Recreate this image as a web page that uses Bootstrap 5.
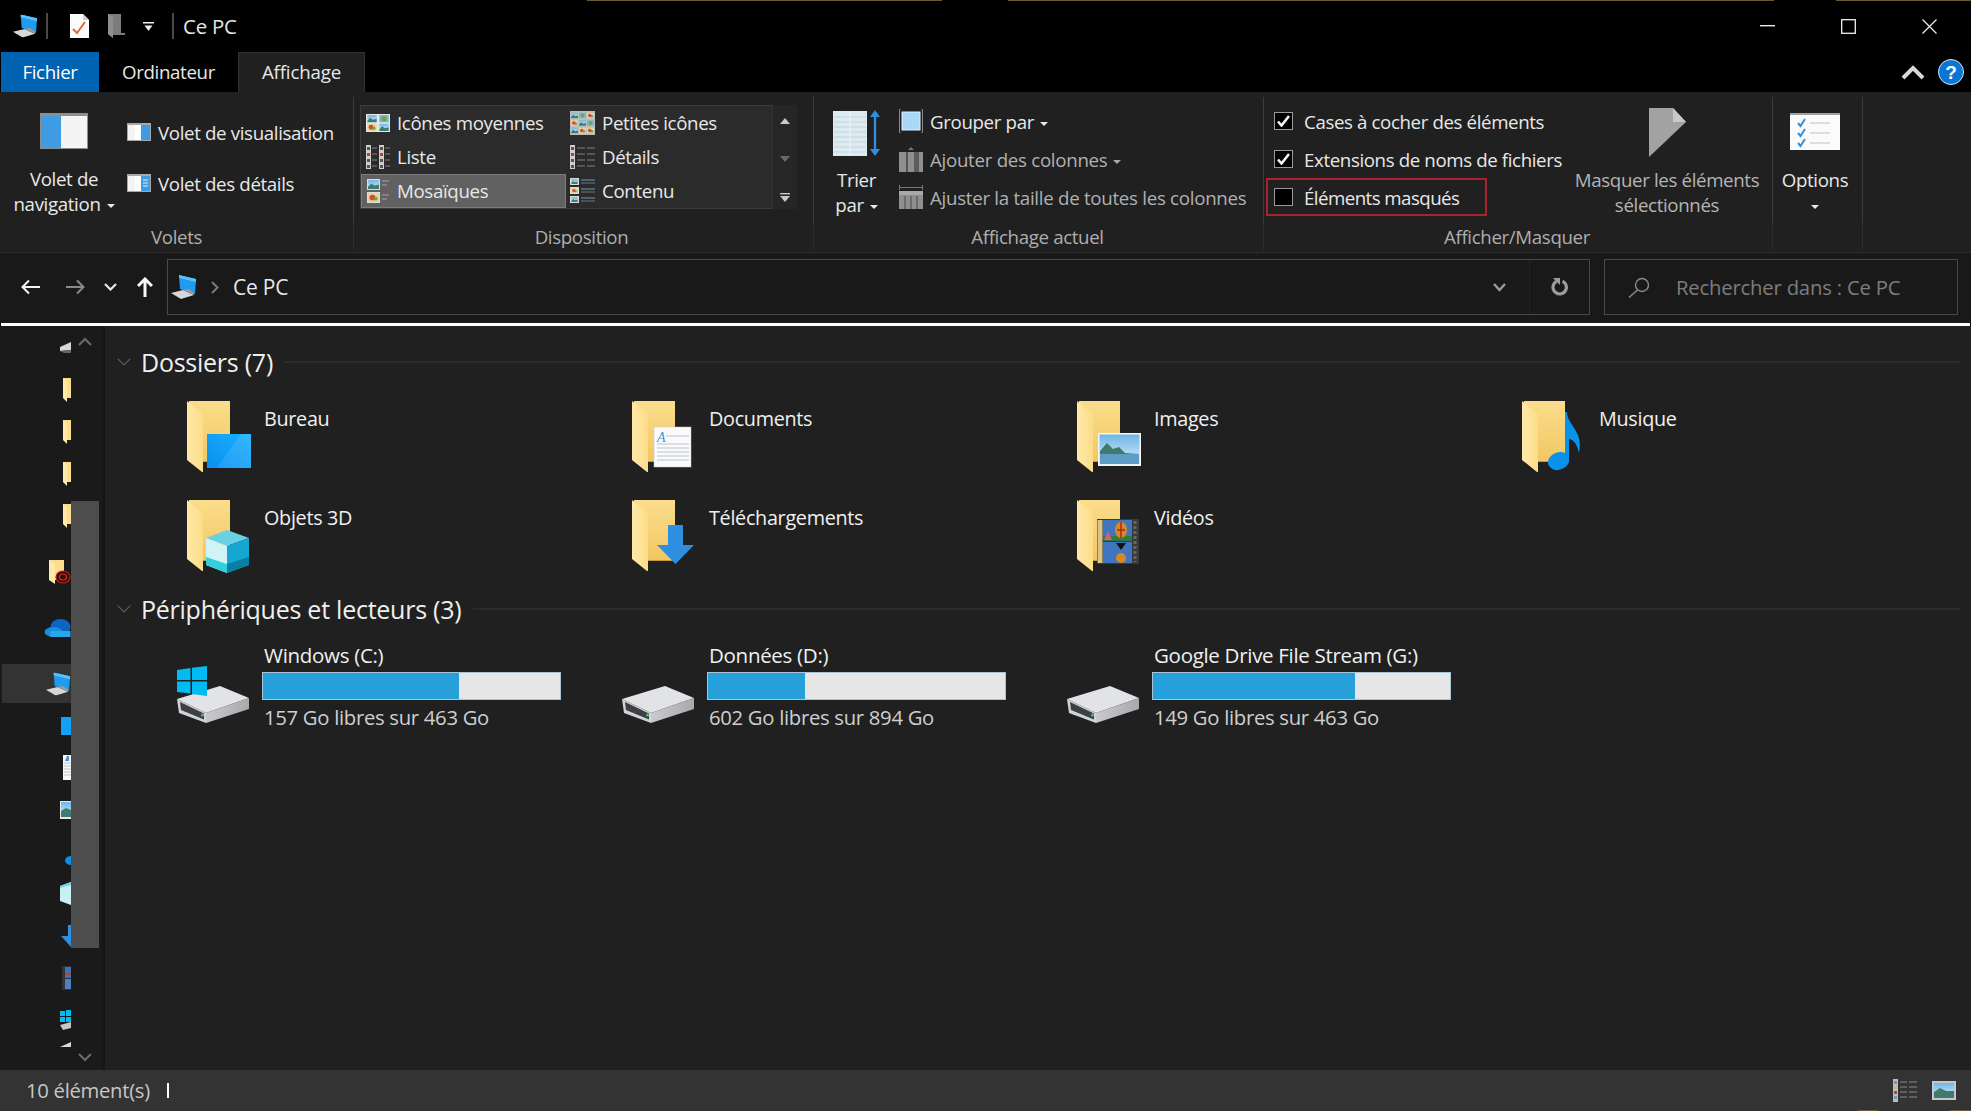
<!DOCTYPE html>
<html lang="fr">
<head>
<meta charset="utf-8">
<title>Ce PC</title>
<link rel="stylesheet" href="https://cdn.jsdelivr.net/npm/bootstrap@5.3.0/dist/css/bootstrap.min.css">
<style>
html,body{height:100%;margin:0}
body{background:#000;color:#e8e8e8;font-family:"Open Sans","Noto Sans",sans-serif;font-size:18.7px;letter-spacing:-.35px;line-height:25px;overflow:hidden}
svg{display:block;flex:none}
.defs-box{width:0;height:0;overflow:hidden}
.shell{width:1971px;height:1111px}
/* title */
.titlebar{height:52px;flex:none;background:linear-gradient(90deg,#000 587px,#6a5a33 587px,#6a5a33 942px,#000 942px,#000 1008px,#6a5a33 1008px,#6a5a33 1774px,#000 1774px,#000 1836px,#6a5a33 1836px) no-repeat top/100% 1px #000;padding-left:13px}
.tsep{width:2px;height:26px;background:#4a4a4a;flex:none}
.m9{margin-left:8px}.m22{margin-left:22px}.m19{margin-left:19px}.m18{margin-left:18px}
.ttl{margin-left:9px;font-size:20.4px;letter-spacing:-.2px;color:#e6e6e6}
.wctl{margin-left:auto;padding-right:34px;gap:66px}
/* tabs */
.tabrow{height:40px;flex:none;background:#000;padding-left:1px}
.tabx{height:40px;display:flex;align-items:center;justify-content:center;color:#e8e8e8;padding:0 0 2px}
.tabx:hover,.tabx:focus{color:#e8e8e8}
.tab-file{width:98px;background:#0063b1;color:#fff}
.tab-file:hover,.tab-file:focus{color:#fff}
.tab-comp{width:139px}
.tab-view{width:127px;background:#202020;border:1px solid #333;border-bottom:0;letter-spacing:-.15px}
.rctl{margin-left:auto;padding-right:7px;gap:13px}
/* ribbon */
.ribbon{height:161px;flex:none;background:#202020;border-bottom:1px solid #2e2e2e}
.rgrp{flex:none}
.rbody{height:126px;margin-top:5px;border-right:1px solid #3c3c3c}
.rlabel{height:27px;border-right:1px solid #2c2c2c;color:#aeaeae;text-align:center;line-height:28px;padding-right:2px}
.g1 .rlabel{padding-right:0}
.g2 .rlabel{padding-right:4px}
.g1{width:354px}.g2{width:460px}.g3{width:450px}.g4{width:509px}.g5{width:90px}
.bigbtn{text-align:center;flex:none}
.bigtxt{margin-top:17px}
.caret-dn{display:inline-block;width:0;height:0;border-left:4px solid transparent;border-right:4px solid transparent;border-top:4px solid #e8e8e8;margin-left:6px;vertical-align:3px}
.caret-dim{border-top-color:#a8a8a8}
.w128{width:128px}
.smcol{margin-left:-1px;padding-top:18px;gap:17px}
.smrow{height:34px;gap:7px}
.gallery{margin:8px 0 0 6px;width:413px;height:104px;background:#2b2b2b;border:1px solid #3c3c3c;border-right-color:#333;display:grid;grid-template-columns:205px 207px;grid-auto-rows:34px;flex:none}
.gcell{gap:7px;padding-left:5px}
.gcell span{margin-top:-2px}
.gcell.gsel{background:#616161;outline:1px solid #7c7c7c;outline-offset:-1px}
.gcell.ic2{padding-left:4px;gap:7px}
.gscroll{margin-top:8px;width:24px;height:104px;background:#262626;padding:13px 0 7px;flex:none}
.trier{width:85px}
.tic{margin-top:13px}
.trtxt{margin-top:11px}
.list3{padding-top:5px}
.lrow{height:38px;gap:7px}
.lrow.dim{color:#b0b0b0;letter-spacing:-.28px}
.chkcol{width:295px;margin-left:2px;flex:none;padding-top:5px}
.ckrow{height:38px;padding-left:8px;gap:11px;letter-spacing:-.38px}
.ckrow.boxed{width:221px;border:2px solid #a9232e;padding-left:6px;letter-spacing:-.55px}
.ckb{width:19px;height:18px;background:#000;border:1px solid #9a9a9a;flex:none;display:flex;align-items:center;justify-content:center}
.masq{width:212px;color:#b4b4b4}
.mic{margin-top:11px}
.mtxt{margin-top:10px}
.opt{width:84px}
/* address */
.addrband{height:70px;flex:none;background:#191919;padding:6px 13px 8px 21px}
.addrbox{width:1423px;height:56px;border:1px solid #4a4a4a;margin-left:14px;padding-left:3px;flex:none}
.nav-m66{margin-left:26px}.nav-m105{margin-left:19px}.nav-m137{margin-left:20px}
.crumb{margin-left:14px;margin-right:14px}
.addrtxt{color:#e8e8e8;font-size:21px;letter-spacing:-.2px}
.addrend{margin-left:auto;height:100%}
.adrop{width:60px;justify-content:flex-start;padding-left:24px}
.arefresh{width:60px;height:100%;border-left:1px solid #242424;justify-content:center}
.search{width:354px;height:56px;border:1px solid #4a4a4a;margin-left:14px;padding-left:23px;gap:25px;color:#7d7d7d;flex:none;font-size:20.3px;letter-spacing:-.2px}
.whitel{height:3px;background:#fff;margin:0 1px;flex:none}
/* content */
.content{height:744px;flex:none;background:#1a1a1a}
.navcol{width:69px;margin-left:2px;padding-top:2px;flex:none;overflow:hidden}
.nrow{height:39px;margin-bottom:3px;justify-content:flex-end;flex:none}
.nrow.sel{background:#333}
.nrow.gapt{margin-top:17px}
.nudge{margin-top:18px}
.sbar{width:28px;flex:none;padding-top:11px;height:744px}
.sthumb{height:447px;width:28px;background:#4d4d4d;margin-top:154px}
.sdn{margin-top:104px}
.splitter{width:3px;background:#161616;margin-left:3px;flex:none}
.mainp{flex:1;background:#202020;padding:22px 0 0 14px;color:#f0f0f0;font-size:19.8px;letter-spacing:-.3px}
.hdr{height:28px;margin-left:-2px;gap:10px;padding-right:10px}
.hdr-t{font-size:25px;letter-spacing:-.25px;color:#efefef;white-space:nowrap}
.hrule{flex:1;height:2px;background:#2b2b2b;margin-left:2px}
.grid4{display:grid;grid-template-columns:repeat(4,445px);margin-left:58px}
.grid4.folders{margin-top:25px;grid-auto-rows:99px;height:198px}
.fitem{display:flex}
.ficon{width:87px;padding-left:10px;flex:none}
.ftext{padding-top:5px;white-space:nowrap}
.hdr2{margin-top:-4px}
.grid4.drives{margin-top:19px;font-size:20.5px}
.ditem{display:flex}
.dicon{width:87px;height:81px;display:flex;align-items:flex-end;flex:none}
.dtitle{height:29px;white-space:nowrap;line-height:26px}
.dbar{width:299px;height:28px;margin-left:-2px;border-radius:0;background:#e6e6e6;border:1px solid #a9c4d6;margin-top:1px}
.dbar .progress-bar{background:#26a0da}
.dsub{color:#cfcfcf;white-space:nowrap;margin-top:5px;font-size:20.3px}
/* status */
.statusb{height:41px;flex:none;background:linear-gradient(90deg,#333 1858px,#6a5a33 1858px,#6a5a33 1878px,#333 1878px,#333 1950px,#6a5a33 1950px) no-repeat bottom/100% 1px #333;padding-left:26px;color:#c6c6c6;padding-right:15px;font-size:20.3px;letter-spacing:-.3px}
.caretbar{width:2px;height:15px;background:#fff;margin-left:17px}
.statr{margin-left:auto;gap:15px}
</style>
</head>
<body>
<svg class="defs-box" xmlns="http://www.w3.org/2000/svg">
<defs>
<linearGradient id="fb" x1="0" y1="0" x2="0" y2="1"><stop offset="0" stop-color="#fbdd8c"/><stop offset="1" stop-color="#f2c763"/></linearGradient>
<linearGradient id="ff" x1="0" y1="0" x2="1" y2="0"><stop offset="0" stop-color="#ffe9a8"/><stop offset="1" stop-color="#fcdc88"/></linearGradient>
<linearGradient id="blu" x1="0" y1="1" x2="1" y2="0"><stop offset="0" stop-color="#0a8ff0"/><stop offset="1" stop-color="#1ab0ff"/></linearGradient>
<linearGradient id="sky" x1="0" y1="0" x2="0" y2="1"><stop offset="0" stop-color="#6fb6e6"/><stop offset="1" stop-color="#d8eefa"/></linearGradient>
<linearGradient id="dr" x1="0" y1="0" x2="1" y2="0"><stop offset="0" stop-color="#c9c9ce"/><stop offset="1" stop-color="#a9a9ad"/></linearGradient>
<symbol id="folder" viewBox="0 0 43 71">
<rect x="2" y="0" width="41" height="60" fill="url(#fb)"/>
<polygon points="0,0 16,13 16,71 15,71 0,59" fill="url(#ff)"/>
<rect x="16" y="60" width="27" height="1" fill="#c79c3e"/>
</symbol>
<symbol id="pc" viewBox="0 0 26 24">
<polygon points="8,0 25,4 24,19 9,14" fill="#1f9bf0"/>
<polygon points="8,0 25,4 25,7 8,3" fill="#5cc1f8"/>
<polygon points="0,18 12,15 23,20 10,24" fill="#d7d7d7"/>
<polygon points="12,15 18,14 23,18 23,20" fill="#9a9a9a"/>
</symbol>
<symbol id="drive" viewBox="0 0 72 37">
<polygon points="0,13 43,0 72,12 29,27" fill="#e1e3e6"/>
<polygon points="29,27 72,12 72,23 29,37" fill="url(#dr)"/>
<polygon points="0,13 29,27 29,37 2,27" fill="#d2d2d4"/>
<polygon points="3,16 27,27.5 27,33.5 4,24" fill="#3c4044"/>
<circle cx="25.5" cy="29" r="1.5" fill="#3ecb5c"/>
</symbol>
<symbol id="land" viewBox="0 0 10 8"><rect width="10" height="8" fill="url(#sky)"/><polygon points="0,6 3,3 6,5 10,4 10,8 0,8" fill="#3c7d70"/></symbol>
<symbol id="flow" viewBox="0 0 10 8"><rect width="10" height="8" fill="#e4d39a"/><circle cx="4" cy="4" r="2.6" fill="#d9482c"/><circle cx="7" cy="5" r="1.7" fill="#63a93e"/></symbol>
<symbol id="ggreen" viewBox="0 0 10 8"><rect width="10" height="8" fill="#7ab6d8"/><circle cx="5" cy="4" r="2.8" fill="#6fa83c"/></symbol>
</defs>
</svg>

<div class="shell d-flex flex-column">
  <!-- TITLE BAR -->
  <div class="titlebar d-flex align-items-center">
    <svg width="25" height="24" viewBox="0 0 26 24"><use href="#pc"/></svg>
    <div class="tsep m9"></div>
    <svg class="m22" width="19" height="24" viewBox="0 0 19 24"><polygon points="0,0 13,0 19,6 19,24 0,24" fill="#fbfbfb"/><polygon points="13,0 19,6 13,6" fill="#cfcfcf"/><path d="M3 15 7 19 15 8" fill="none" stroke="#e9662a" stroke-width="2"/></svg>
    <svg class="m19" width="17" height="24" viewBox="0 0 17 24"><polygon points="0,0 13,0 13,19 17,19 17,21 5,21 5,24 0,20" fill="#7c7c7c"/><polygon points="0,0 5,3 5,24 0,20" fill="#8e8e8e"/></svg>
    <svg class="m18" width="11" height="9" viewBox="0 0 11 9"><rect width="11" height="1.5" fill="#eee"/><polygon points="1.5,3.5 9.5,3.5 5.5,9" fill="#eee"/></svg>
    <div class="tsep m18"></div>
    <div class="ttl">Ce PC</div>
    <div class="wctl d-flex align-items-center">
      <svg width="15" height="2" viewBox="0 0 15 2"><rect width="15" height="1.4" fill="#e8e8e8"/></svg>
      <svg width="15" height="15" viewBox="0 0 15 15"><rect x=".7" y=".7" width="13.6" height="13.6" fill="none" stroke="#f0f0f0" stroke-width="1.3"/></svg>
      <svg width="15" height="15" viewBox="0 0 15 15"><path d="M.5.5 14.5 14.5M14.5.5.5 14.5" stroke="#f0f0f0" stroke-width="1.2"/></svg>
    </div>
  </div>
  <!-- TABS -->
  <div class="tabrow d-flex align-items-end">
    <ul class="nav">
      <li class="nav-item"><a class="nav-link tabx tab-file" href="#">Fichier</a></li>
      <li class="nav-item"><a class="nav-link tabx tab-comp" href="#">Ordinateur</a></li>
      <li class="nav-item"><a class="nav-link tabx tab-view" href="#">Affichage</a></li>
    </ul>
    <div class="rctl d-flex align-items-center align-self-center">
      <svg width="24" height="17" viewBox="0 0 24 17"><path d="M2 14 12 4 22 14" fill="none" stroke="#d8d8d8" stroke-width="4"/></svg>
      <svg width="26" height="26" viewBox="0 0 26 26"><circle cx="13" cy="13" r="12.5" fill="#0a76d3" stroke="#cfe6fa" stroke-width="1"/><text x="13" y="19.5" text-anchor="middle" font-family="Liberation Sans,sans-serif" font-size="19" font-weight="700" fill="#fff">?</text></svg>
    </div>
  </div>
  <!-- RIBBON -->
  <div class="ribbon d-flex">
    <!-- Volets -->
    <div class="rgrp g1">
      <div class="rbody d-flex">
        <div class="bigbtn w128">
          <div class="d-flex justify-content-center pt-3">
            <svg width="48" height="36" viewBox="0 0 48 36"><rect width="48" height="36" fill="#8e8e8e"/><rect x="1" y="3" width="20" height="32" fill="#3f9be2"/><rect x="21" y="3" width="26" height="32" fill="#f4f4f4"/></svg>
          </div>
          <div class="bigtxt">Volet de<br>navigation<span class="caret-dn"></span></div>
        </div>
        <div class="smcol d-flex flex-column">
          <div class="smrow d-flex align-items-center"><svg width="24" height="18" viewBox="0 0 24 18"><rect width="24" height="18" fill="#a8a8a8"/><rect x="1" y="2" width="7" height="15" fill="#f4f4f4"/><rect x="8" y="2" width="6" height="15" fill="#ffffff"/><rect x="14" y="2" width="9" height="15" fill="#3f9be2"/></svg><span>Volet de visualisation</span></div>
          <div class="smrow d-flex align-items-center"><svg width="24" height="18" viewBox="0 0 24 18"><rect width="24" height="18" fill="#a8a8a8"/><rect x="1" y="2" width="7" height="15" fill="#f4f4f4"/><rect x="8" y="2" width="6" height="15" fill="#ffffff"/><rect x="14" y="2" width="9" height="15" fill="#3f9be2"/><path d="M16 6h5M16 9h5M16 12h5" stroke="#dff0fb" stroke-width="1"/></svg><span>Volet des détails</span></div>
        </div>
      </div>
      <div class="rlabel">Volets</div>
    </div>
    <!-- Disposition -->
    <div class="rgrp g2">
      <div class="rbody d-flex">
        <div class="gallery">
          <div class="gcell d-flex align-items-center"><svg width="24" height="18" viewBox="0 0 24 18"><rect width="24" height="18" fill="#e8e8e8"/><use href="#land" x="1" y="1" width="10" height="7.5"/><use href="#ggreen" x="13" y="1" width="10" height="7.5"/><use href="#flow" x="1" y="9.5" width="10" height="7.5"/><use href="#land" x="13" y="9.5" width="10" height="7.5"/></svg><span>Icônes moyennes</span></div>
          <div class="gcell ic2 d-flex align-items-center"><svg width="25" height="24" viewBox="0 0 25 24"><rect width="25" height="24" fill="#bdbdbd"/><use href="#land" x="1" y="1" width="7" height="7"/><use href="#ggreen" x="9" y="1" width="7" height="7"/><use href="#flow" x="17" y="1" width="7" height="7"/><use href="#flow" x="1" y="8.5" width="7" height="7"/><use href="#land" x="9" y="8.5" width="7" height="7"/><use href="#ggreen" x="17" y="8.5" width="7" height="7"/><use href="#land" x="1" y="16" width="7" height="7"/><use href="#flow" x="9" y="16" width="7" height="7"/><use href="#flow" x="17" y="16" width="7" height="7"/></svg><span>Petites icônes</span></div>
          <div class="gcell d-flex align-items-center"><svg width="24" height="24" viewBox="0 0 24 24"><rect x="0" y="0" width="5" height="24" fill="#cfcfcf"/><rect x="1" y="2" width="3" height="3" fill="#555"/><rect x="1" y="8" width="3" height="3" fill="#b4452f"/><rect x="1" y="14" width="3" height="3" fill="#555"/><rect x="1" y="20" width="3" height="3" fill="#555"/><path d="M6 3h5M6 9h5M6 15h5M6 21h5" stroke="#666" stroke-width="1.4"/><rect x="13" y="0" width="5" height="24" fill="#cfcfcf"/><rect x="14" y="2" width="3" height="3" fill="#555"/><rect x="14" y="8" width="3" height="3" fill="#b4452f"/><rect x="14" y="14" width="3" height="3" fill="#555"/><rect x="14" y="20" width="3" height="3" fill="#555"/><path d="M19 3h5M19 9h5M19 15h5M19 21h5" stroke="#666" stroke-width="1.4"/></svg><span>Liste</span></div>
          <div class="gcell ic2 d-flex align-items-center"><svg width="25" height="24" viewBox="0 0 25 24"><rect x="0" y="0" width="5" height="24" fill="#cfcfcf"/><rect x="1" y="2" width="3" height="3" fill="#555"/><rect x="1" y="8" width="3" height="3" fill="#b4452f"/><rect x="1" y="14" width="3" height="3" fill="#555"/><rect x="1" y="20" width="3" height="3" fill="#555"/><path d="M7 3h8M17 3h8M7 9h8M17 9h8M7 15h8M17 15h8M7 21h8M17 21h8" stroke="#666" stroke-width="1.4"/></svg><span>Détails</span></div>
          <div class="gcell gsel d-flex align-items-center"><svg width="24" height="26" viewBox="0 0 24 26"><rect x="1" y="1" width="13" height="11" fill="#ddd"/><use href="#land" x="2" y="2" width="11" height="9"/><rect x="1" y="14" width="13" height="11" fill="#ddd"/><use href="#flow" x="2" y="15" width="11" height="9"/><path d="M16 3h7M16 7h5M16 17h7M16 21h5" stroke="#8e8e8e" stroke-width="1.4"/></svg><span>Mosaïques</span></div>
          <div class="gcell ic2 d-flex align-items-center"><svg width="25" height="26" viewBox="0 0 25 26"><rect x="0" y="0" width="9" height="7" fill="#ddd"/><use href="#land" x="1" y="1" width="7" height="5"/><rect x="0" y="9" width="9" height="7" fill="#ddd"/><use href="#flow" x="1" y="10" width="7" height="5"/><rect x="0" y="18" width="9" height="7" fill="#ddd"/><use href="#land" x="1" y="19" width="7" height="5"/><path d="M11 2h14M11 11h14M11 20h14" stroke="#6d9bc6" stroke-width="1.2"/><path d="M11 5h14M11 14h14M11 23h14" stroke="#777" stroke-width="1.2"/></svg><span>Contenu</span></div>
        </div>
        <div class="gscroll d-flex flex-column justify-content-between align-items-center">
          <svg width="10" height="6" viewBox="0 0 10 6"><polygon points="5,0 10,6 0,6" fill="#c8c8c8"/></svg>
          <svg width="10" height="6" viewBox="0 0 10 6"><polygon points="5,6 10,0 0,0" fill="#6a6a6a"/></svg>
          <svg width="10" height="9" viewBox="0 0 10 9"><rect width="10" height="1.4" fill="#c8c8c8"/><polygon points="5,9 10,3 0,3" fill="#c8c8c8"/></svg>
        </div>
      </div>
      <div class="rlabel">Disposition</div>
    </div>
    <!-- Affichage actuel -->
    <div class="rgrp g3">
      <div class="rbody d-flex">
        <div class="bigbtn trier">
          <div class="tic d-flex justify-content-center">
            <svg width="48" height="46" viewBox="0 0 48 46"><rect x="0" y="1" width="34" height="45" fill="#dceaf2"/><path d="M1 7h32M1 12h32M1 17h32M1 22h32M1 27h32M1 32h32M1 37h32M1 42h32" stroke="#c4d4dc" stroke-width="1"/><path d="M17 1v45" stroke="#eef5f8" stroke-width="1"/><path d="M42 5v36" stroke="#2e8fe0" stroke-width="2.4"/><polygon points="42,0 47,7 37,7" fill="#2e8fe0"/><polygon points="42,46 47,39 37,39" fill="#2e8fe0"/></svg>
          </div>
          <div class="trtxt">Trier<br>par<span class="caret-dn"></span></div>
        </div>
        <div class="list3 d-flex flex-column">
          <div class="lrow d-flex align-items-center"><svg width="24" height="24" viewBox="0 0 24 24"><path d="M1.5 0.5H0.5V23.5H1.5M22.5 0.5H23.5V23.5H22.5" fill="none" stroke="#888"/><rect x="3" y="3" width="18" height="18" fill="#a9d7f8" stroke="#dff1fd"/></svg><span>Grouper par<span class="caret-dn"></span></span></div>
          <div class="lrow dim d-flex align-items-center"><svg width="24" height="25" viewBox="0 0 24 25"><rect y="5" width="24" height="20" fill="#8f8f8f"/><rect x="7" y="5" width="2" height="20" fill="#555"/><rect x="15" y="5" width="5" height="20" fill="#5d5d5d"/><polygon points="12,0 15,3 9,3" fill="#777"/></svg><span>Ajouter des colonnes<span class="caret-dn caret-dim"></span></span></div>
          <div class="lrow dim d-flex align-items-center"><svg width="24" height="24" viewBox="0 0 24 24"><path d="M.5 0v5M23.5 0v5M1 2.5h22" stroke="#777" stroke-width="1"/><rect y="6" width="24" height="18" fill="#8f8f8f"/><rect y="6" width="24" height="4" fill="#a8a8a8"/><path d="M6 11v13M12 11v13M18 11v13" stroke="#555" stroke-width="1.2"/></svg><span>Ajuster la taille de toutes les colonnes</span></div>
        </div>
      </div>
      <div class="rlabel">Affichage actuel</div>
    </div>
    <!-- Afficher/Masquer -->
    <div class="rgrp g4">
      <div class="rbody d-flex">
        <div class="chkcol d-flex flex-column">
          <div class="ckrow d-flex align-items-center"><span class="ckb"><svg width="13" height="12" viewBox="0 0 13 12"><path d="M1 6.5 4.5 10.5 12 1" fill="none" stroke="#f4f4f4" stroke-width="2.6"/></svg></span><span class="text-nowrap">Cases à cocher des éléments</span></div>
          <div class="ckrow d-flex align-items-center"><span class="ckb"><svg width="13" height="12" viewBox="0 0 13 12"><path d="M1 6.5 4.5 10.5 12 1" fill="none" stroke="#f4f4f4" stroke-width="2.6"/></svg></span><span class="text-nowrap">Extensions de noms de fichiers</span></div>
          <div class="ckrow boxed d-flex align-items-center"><span class="ckb"></span><span class="text-nowrap">Éléments masqués</span></div>
        </div>
        <div class="bigbtn masq">
          <div class="mic d-flex justify-content-center"><svg width="37" height="49" viewBox="0 0 37 49"><polygon points="0,0 24,0 37,14 0,49" fill="#a2a2a2"/><polygon points="24,0 37,14 24,14" fill="#c8c8c8"/></svg></div>
          <div class="mtxt">Masquer les éléments<br>sélectionnés</div>
        </div>
      </div>
      <div class="rlabel">Afficher/Masquer</div>
    </div>
    <!-- Options -->
    <div class="rgrp g5">
      <div class="rbody">
        <div class="bigbtn opt">
          <div class="d-flex justify-content-center pt-3"><svg width="50" height="37" viewBox="0 0 50 37"><rect width="50" height="37" fill="#fbfbfb"/><rect width="50" height="2" fill="#a0a0a0"/><path d="M8 10 10.500 13 15 6M8 20 10.500 23 15 16M8 30 10.500 33 15 26" fill="none" stroke="#3a8ed6" stroke-width="2"/><path d="M20 10h20M20 20h20M20 30h20" stroke="#d6d6d6" stroke-width="1.5"/></svg></div>
          <div class="bigtxt">Options<br><span class="caret-dn m-0"></span></div>
        </div>
      </div>
      <div class="rlabel"></div>
    </div>
  </div>
  <!-- ADDRESS -->
  <div class="addrband d-flex align-items-center">
    <svg width="19" height="16" viewBox="0 0 19 16"><path d="M19 8H2M8 1.500 1.500 8 8 14.500" fill="none" stroke="#f4f4f4" stroke-width="2"/></svg>
    <svg class="nav-m66" width="19" height="16" viewBox="0 0 19 16"><path d="M0 8H17M11 1.500 17.500 8 11 14.500" fill="none" stroke="#8a8a8a" stroke-width="2"/></svg>
    <svg class="nav-m105" width="13" height="8" viewBox="0 0 13 8"><path d="M1 1 6.500 6.500 12 1" fill="none" stroke="#e8e8e8" stroke-width="2.200"/></svg>
    <svg class="nav-m137" width="16" height="20" viewBox="0 0 16 20"><path d="M8 20V2M1 9 8 2 15 9" fill="none" stroke="#f8f8f8" stroke-width="3"/></svg>
    <div class="addrbox d-flex align-items-center">
      <svg width="26" height="24" viewBox="0 0 26 24"><use href="#pc"/></svg>
      <svg class="crumb" width="8" height="13" viewBox="0 0 8 13"><path d="M1 1 6.500 6.500 1 12" fill="none" stroke="#7a7a7a" stroke-width="2"/></svg>
      <span class="addrtxt">Ce PC</span>
      <div class="addrend d-flex align-items-center">
        <div class="adrop d-flex align-items-center"><svg width="13" height="9" viewBox="0 0 13 9"><path d="M1 1 6.500 7 12 1" fill="none" stroke="#9c9c9c" stroke-width="2.400"/></svg></div>
        <div class="arefresh d-flex align-items-center"><svg width="18" height="18" viewBox="0 0 18 18"><path d="M11.500 3.200A6.700 6.700 0 1 1 5.500 3.400" fill="none" stroke="#9c9c9c" stroke-width="3.200"/><polygon points="2,0 9,0 9,7" fill="#9c9c9c"/></svg></div>
      </div>
    </div>
    <div class="search d-flex align-items-center">
      <svg width="23" height="21" viewBox="0 0 23 21"><circle cx="14" cy="8" r="6.500" fill="none" stroke="#8a8a8a" stroke-width="1.400"/><path d="M9.500 13 1 20.500" stroke="#8a8a8a" stroke-width="1.500"/></svg>
      <span>Rechercher dans : Ce PC</span>
    </div>
  </div>
  <div class="whitel"></div>
  <!-- CONTENT -->
  <div class="content d-flex">
    <div class="navcol">
      <div class="nrow d-flex align-items-center"><svg width="11" height="11" viewBox="0 0 11 11"><polygon points="0,5 11,0 11,8 0,9" fill="#d8d8d8"/><polygon points="0,9 11,8 11,11 4,11" fill="#666"/></svg></div>
      <div class="nrow d-flex align-items-center"><svg width="8" height="24" viewBox="0 0 8 24"><rect width="8" height="20" fill="#fbdd8c"/><polygon points="0,0 4,3 4,24 0,20" fill="#ffe9a8"/></svg></div>
      <div class="nrow d-flex align-items-center"><svg width="8" height="24" viewBox="0 0 8 24"><rect width="8" height="20" fill="#fbdd8c"/><polygon points="0,0 4,3 4,24 0,20" fill="#ffe9a8"/></svg></div>
      <div class="nrow d-flex align-items-center"><svg width="8" height="24" viewBox="0 0 8 24"><rect width="8" height="20" fill="#fbdd8c"/><polygon points="0,0 4,3 4,24 0,20" fill="#ffe9a8"/></svg></div>
      <div class="nrow d-flex align-items-center"><svg width="8" height="24" viewBox="0 0 8 24"><rect width="8" height="20" fill="#fbdd8c"/><polygon points="0,0 4,3 4,24 0,20" fill="#ffe9a8"/></svg></div>
      <div class="nrow gapt d-flex align-items-center"><svg width="22" height="24" viewBox="0 0 22 24"><rect width="15" height="20" fill="#fbdd8c"/><polygon points="0,0 6,3 6,24 0,20" fill="#ffe9a8"/><ellipse cx="14" cy="17" rx="7" ry="6" fill="#3a0a08" stroke="#c21b16" stroke-width="1.200"/><ellipse cx="14" cy="17" rx="3.500" ry="3" fill="none" stroke="#d2352d" stroke-width="1.200"/></svg></div>
      <div class="nrow gapt d-flex align-items-center"><svg width="27" height="18" viewBox="0 0 26 18"><ellipse cx="16" cy="8" rx="10" ry="8" fill="#0a66c2"/><ellipse cx="9" cy="13" rx="9" ry="5" fill="#1490df"/><rect x="6" y="12" width="20" height="6" fill="#28a8ea"/></svg></div>
      <div class="nrow sel gapt d-flex align-items-center"><svg width="25" height="24" viewBox="0 0 26 24"><use href="#pc"/></svg></div>
      <div class="nrow d-flex align-items-center"><svg width="10" height="18" viewBox="0 0 10 18"><rect width="10" height="18" fill="#12a0f8"/></svg></div>
      <div class="nrow d-flex align-items-center"><svg width="8" height="25" viewBox="0 0 8 25"><rect width="8" height="25" fill="#f8f8f8"/><path d="M1 8h7M1 11h7M1 14h7M1 17h7M1 20h7" stroke="#b7c4d0" stroke-width="1"/><polygon points="4,1 6,1 6,6 2,6" fill="#4a92d4"/></svg></div>
      <div class="nrow d-flex align-items-center"><svg width="11" height="18" viewBox="0 0 11 18"><rect width="11" height="18" fill="#e8e8e8"/><rect x="1" y="1" width="10" height="15" fill="url(#sky)"/><polygon points="1,10 6,7 11,9 11,16 1,16" fill="#3c7d70"/></svg></div>
      <div class="nrow d-flex align-items-center"><svg class="nudge" width="6" height="9" viewBox="0 0 6 9"><ellipse cx="6" cy="4.500" rx="6" ry="4.500" fill="#0a8fe6"/></svg></div>
      <div class="nrow d-flex align-items-center"><svg width="11" height="23" viewBox="0 0 11 23"><polygon points="0,4 11,0 11,23 0,19" fill="#c6f0f3"/><polygon points="0,4 11,0 11,3 0,6" fill="#72d4e2"/></svg></div>
      <div class="nrow d-flex align-items-center"><svg width="10" height="22" viewBox="0 0 10 22"><rect x="7" y="0" width="3" height="12" fill="#2e8fe0"/><polygon points="0,11 10,11 10,22" fill="#2e8fe0"/></svg></div>
      <div class="nrow d-flex align-items-center"><svg width="9" height="24" viewBox="0 0 9 24"><rect width="9" height="24" fill="#333"/><rect x="3" y="1" width="6" height="11" fill="#3e72b8"/><rect x="3" y="7" width="6" height="2" fill="#c04030"/><rect x="3" y="13" width="6" height="10" fill="#4e80c4"/></svg></div>
      <div class="nrow d-flex align-items-center"><svg width="11" height="20" viewBox="0 0 11 20"><rect x="0" y="1" width="5" height="5" fill="#00bcf2"/><rect x="6" y="0" width="5" height="6" fill="#00bcf2"/><rect x="0" y="7" width="5" height="5" fill="#00bcf2"/><rect x="6" y="7" width="5" height="5" fill="#00bcf2"/><polygon points="0,15 11,12 11,18 3,20" fill="#c8c8c8"/></svg></div>
      <div class="nrow d-flex align-items-start"><svg width="11" height="5" viewBox="0 0 11 5"><polygon points="0,5 11,0 11,5" fill="#d8d8d8"/></svg></div>
    </div>
    <div class="sbar">
      <div class="d-flex justify-content-center"><svg width="16" height="10" viewBox="0 0 16 10"><path d="M2 8 8 2 14 8" fill="none" stroke="#6c6c6c" stroke-width="2"/></svg></div>
      <div class="sthumb"></div>
      <div class="sdn d-flex justify-content-center"><svg width="16" height="10" viewBox="0 0 16 10"><path d="M2 2 8 8 14 2" fill="none" stroke="#6c6c6c" stroke-width="2"/></svg></div>
    </div>
    <div class="splitter"></div>
    <div class="mainp">
      <div class="hdr d-flex align-items-center">
        <svg width="14" height="8" viewBox="0 0 14 8"><path d="M.7.700 7 7 13.300.700" fill="none" stroke="#5c5c5c" stroke-width="1.200"/></svg>
        <span class="hdr-t">Dossiers (7)</span><div class="hrule"></div>
      </div>
      <div class="grid4 folders">
        <div class="fitem"><div class="ficon"><svg width="64" height="74" viewBox="0 0 64 74"><use href="#folder" width="43" height="71"/><polygon points="20,33 64,33 64,67 20,67" fill="url(#blu)"/><polygon points="30,67 54,33 64,33 64,67" fill="#ffffff" opacity=".1"/></svg></div><div class="ftext">Bureau</div></div>
        <div class="fitem"><div class="ficon"><svg width="64" height="74" viewBox="0 0 64 74"><use href="#folder" width="43" height="71"/><rect x="22" y="26" width="37" height="40" fill="#fafafa" stroke="#c8c8c8" stroke-width=".5"/><text x="25" y="41" font-family="Liberation Serif,serif" font-style="italic" font-size="14" fill="#4a92d4">A</text><path d="M34 35h23M25 43h32M25 47h32M25 51h32M25 55h32M25 59h32" stroke="#b7c4d0" stroke-width="1"/></svg></div><div class="ftext">Documents</div></div>
        <div class="fitem"><div class="ficon"><svg width="64" height="74" viewBox="0 0 64 74"><use href="#folder" width="43" height="71"/><rect x="21" y="32" width="43" height="33" fill="#f6f6f6"/><rect x="22.500" y="33.500" width="40" height="30" fill="url(#sky)"/><polygon points="23,50 30,42 36,48 42,46 48,52 62,53 62,63 23,63" fill="#3f7a6c"/><rect x="23" y="53" width="39" height="10" fill="#5d9cc4"/></svg></div><div class="ftext">Images</div></div>
        <div class="fitem"><div class="ficon"><svg width="64" height="74" viewBox="0 0 64 74"><use href="#folder" width="43" height="71"/><path d="M45 11C45 24 62 30 57 52C55 43 52 39 47 38V60C47 65 39 70 33 69C26 67 24 61 28 56C32 51 39 50 43 52V11Z" fill="#0a92ea"/></svg></div><div class="ftext">Musique</div></div>
        <div class="fitem"><div class="ficon"><svg width="64" height="74" viewBox="0 0 64 74"><use href="#folder" width="43" height="71"/><polygon points="40,30 62,38 40,46 19,38" fill="#6ad0e4"/><polygon points="19,38 40,46 40,73 19,65" fill="#d2f3f6"/><polygon points="40,46 62,38 62,65 40,73" fill="#16a6d2"/><polygon points="19,57 40,64 40,73 19,65" fill="#34cfdc"/><polygon points="40,64 62,57 62,65 40,73" fill="#0a7fa4"/></svg></div><div class="ftext">Objets 3D</div></div>
        <div class="fitem"><div class="ficon"><svg width="64" height="74" viewBox="0 0 64 74"><use href="#folder" width="43" height="71"/><rect x="36" y="25" width="15" height="20" fill="#2e8fe0"/><polygon points="25,45 62,45 43.500,64" fill="#2e8fe0"/></svg></div><div class="ftext">Téléchargements</div></div>
        <div class="fitem"><div class="ficon"><svg width="64" height="74" viewBox="0 0 64 74"><use href="#folder" width="43" height="71"/><rect x="20" y="19" width="42" height="45" fill="#3a3a3a"/><rect x="20.500" y="20" width="5" height="43" fill="#d9c48a"/><rect x="26" y="20" width="29" height="21" fill="#3f76bf"/><rect x="26" y="42" width="29" height="21" fill="#3f76bf"/><rect x="26" y="36" width="29" height="5" fill="#2f7a45"/><ellipse cx="44" cy="30" rx="6" ry="8" fill="#d98a1e"/><path d="M40 30h8M44 22v16" stroke="#a82a20" stroke-width="1.500"/><polygon points="27,40 31,31 35,40" fill="#d65d7a"/><ellipse cx="44" cy="58" rx="5" ry="5" fill="#d98a1e"/><polygon points="39,43 49,43 44,50" fill="#111"/><path d="M58 21v41" stroke="#666" stroke-width="3" stroke-dasharray="3 2"/></svg></div><div class="ftext">Vidéos</div></div>
      </div>
      <div class="hdr hdr2 d-flex align-items-center">
        <svg width="14" height="8" viewBox="0 0 14 8"><path d="M.7.700 7 7 13.300.700" fill="none" stroke="#5c5c5c" stroke-width="1.200"/></svg>
        <span class="hdr-t">Périphériques et lecteurs (3)</span><div class="hrule"></div>
      </div>
      <div class="grid4 drives">
        <div class="ditem"><div class="dicon"><svg width="72" height="57" viewBox="0 0 72 57"><use href="#drive" y="20" width="72" height="37"/><polygon points="0,4 13.500,2 13.500,14 0,14" fill="#00bcf2"/><polygon points="15,1.800 30,0 30,14 15,14" fill="#00bcf2"/><polygon points="0,15.500 13.500,15.500 13.500,27.500 0,26" fill="#00bcf2"/><polygon points="15,15.500 30,15.500 30,30 15,28" fill="#00bcf2"/></svg></div><div><div class="dtitle">Windows (C:)</div><div class="progress dbar"><div class="progress-bar" style="width:65.9%"></div></div><div class="dsub">157 Go libres sur 463 Go</div></div></div>
        <div class="ditem"><div class="dicon"><svg width="72" height="37" viewBox="0 0 72 37"><use href="#drive"/></svg></div><div><div class="dtitle">Données (D:)</div><div class="progress dbar"><div class="progress-bar" style="width:32.6%"></div></div><div class="dsub">602 Go libres sur 894 Go</div></div></div>
        <div class="ditem"><div class="dicon"><svg width="72" height="37" viewBox="0 0 72 37"><use href="#drive"/></svg></div><div><div class="dtitle">Google Drive File Stream (G:)</div><div class="progress dbar"><div class="progress-bar" style="width:67.9%"></div></div><div class="dsub">149 Go libres sur 463 Go</div></div></div>
      </div>
    </div>
  </div>
  <!-- STATUS -->
  <div class="statusb d-flex align-items-center">
    <span>10 élément(s)</span><span class="caretbar"></span>
    <div class="statr d-flex align-items-center">
      <svg width="24" height="23" viewBox="0 0 24 23"><rect width="5" height="23" fill="#bdbdbd"/><rect x="1" y="2" width="3" height="3" fill="#6a9ab8"/><rect x="1" y="7" width="3" height="3" fill="#c9b982"/><rect x="1" y="12" width="3" height="3" fill="#b4452f"/><rect x="1" y="17" width="3" height="3" fill="#6a9ab8"/><path d="M7 3h7M16 3h8M7 8h7M16 8h8M7 13h7M16 13h8M7 18h7M16 18h8" stroke="#6e6e6e" stroke-width="1.400"/></svg>
      <svg width="24" height="19" viewBox="0 0 24 19"><rect width="24" height="19" fill="#c8c8c8"/><rect x="2" y="2" width="20" height="15" fill="url(#sky)"/><polygon points="2,11 8,7 14,10 22,10 22,17 2,17" fill="#3f7a6c"/></svg>
    </div>
  </div>
</div>
</body>
</html>
